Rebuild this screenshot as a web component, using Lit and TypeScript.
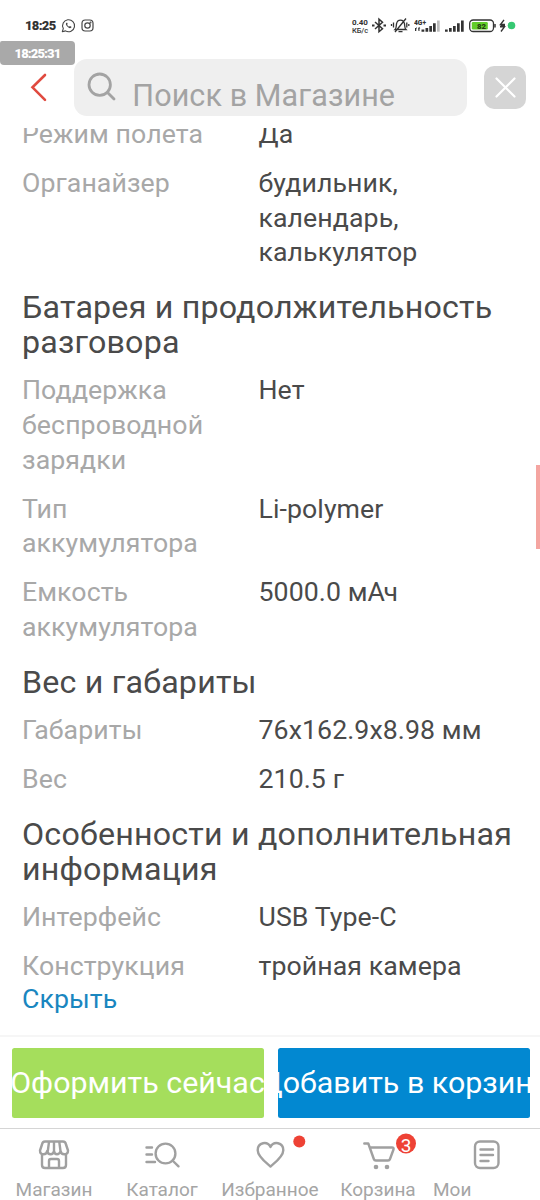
import { LitElement, html, css, svg } from "lit";
import { customElement, property } from "lit/decorators.js";

type Row = [string, string];
interface Section {
  title?: string;
  rows: Row[];
}

const SECTIONS: Section[] = [
  {
    rows: [
      ["Режим полета", "Да"],
      ["Органайзер", "будильник, календарь, калькулятор"],
    ],
  },
  {
    title: "Батарея и продолжительность разговора",
    rows: [
      ["Поддержка беспроводной зарядки", "Нет"],
      ["Тип аккумулятора", "Li-polymer"],
      ["Емкость аккумулятора", "5000.0 мАч"],
    ],
  },
  {
    title: "Вес и габариты",
    rows: [
      ["Габариты", "76x162.9x8.98 мм"],
      ["Вес", "210.5 г"],
    ],
  },
  {
    title: "Особенности и дополнительная информация",
    rows: [
      ["Интерфейс", "USB Type-C"],
      ["Конструкция", "тройная камера"],
    ],
  },
];

@customElement("status-bar")
export class StatusBar extends LitElement {
  static styles = css`
    :host {
      display: flex;
      height: 24px;
      padding: 14px 24px 0 25px;
      align-items: center;
      color: #333;
      font-family: Roboto, sans-serif;
    }
    svg {
      display: block;
      height: 24px;
      flex: none;
    }
    .clock {
      font-size: 13px;
      font-weight: 900;
      width: 36px;
      line-height: 24px;
      letter-spacing: -0.7px;
      white-space: nowrap;
    }
    .apps {
      display: flex;
      gap: 4px;
    }
    .right {
      display: flex;
      margin-left: auto;
    }
    .speed {
      width: 19px;
      font-size: 8px;
      line-height: 8px;
      font-weight: 700;
      padding-top: 5px;
      letter-spacing: -0.1px;
    }
    .unit {
      font-weight: 500;
      font-size: 7.5px;
      line-height: 7px;
    }
    .tiny {
      font: 900 8px Roboto, sans-serif;
    }
  `;

  render() {
    return html`
      <span class="clock">18:25</span>
      <span class="apps">
        <svg width="15" viewBox="61 14 15 24" fill="none" stroke="#444" stroke-width="1.1">
          <path d="M62.3 31.7 63.3 28.6A6 6 0 1 1 65.5 30.9Z" stroke-linejoin="round" />
          <path d="M66.4 22.8c-.9.8-.6 2 .4 3.3 1.200 1.500 2.600 2.300 3.700 2 .8-.3 1.100-.9.900-1.400l-1.500-.8-.9.800c-1-.5-1.500-1.100-1.900-1.900l.6-.8-.5-1.300z" fill="#444" stroke="none" />
        </svg>
        <svg width="15" viewBox="80 14 15 24" fill="none" stroke="#444" stroke-width="1.200">
          <rect x="82" y="20" width="11" height="11" rx="3.200" />
          <circle cx="87.500" cy="25.500" r="2.700" />
          <circle cx="90.500" cy="22.500" r=".4" />
        </svg>
      </span>
      <span class="right">
        <span class="speed">0.40<br /><span class="unit">КБ/с</span></span>
        <svg width="19" viewBox="371 14 19 24" fill="none" stroke="#333" stroke-width="1.500">
          <path d="m375 22 7.500 6.700-3.500 3V19.200l3.500 3.100L375 29" />
          <path d="M372 25.500h2.500M383.500 25.500h2.500" stroke-width="2.200" />
        </svg>
        <svg width="24" viewBox="390 14 24 24" fill="none" stroke="#333" stroke-width="1.300">
          <path d="M395 29.500c1.600-1.500 1.100-3.600 1.500-5.500.5-2.700 2.100-3.800 4-3.800s3.500 1.100 4 3.800c.4 1.900-.1 4 1.500 5.500zM398.500 31.700h4M395 32l11-13.500" />
          <path d="M393.500 22.500v5M391.500 24v2M406.800 22.500v5M408.800 24v2" />
        </svg>
        <svg width="27" viewBox="414 14 27 24" fill="#333">
          <text class="tiny" x="414" y="24.500" textLength="12" lengthAdjust="spacingAndGlyphs">4G+</text>
          <path d="M415 28h1v-1.200l1 1.700h-.7V31H415zM418.500 31h1v-2.500h.8l-1.200-1.700-1 1.700zM421.500 29.500h2.800v2.200h-2.800zM425.500 28h2.700v3.700h-2.700zM429.300 26h2.700v5.700h-2.700zM433 23.300h2.700v8.400H433z" />
          <path d="M437 20.500h2.700v11.200H437z" fill="#bbb" />
        </svg>
        <svg width="27" viewBox="441 14 27 24" fill="#333">
          <path d="M445 29.500h2.700v2.200H445zM449 28h2.700v3.700H449zM453 26h2.700v5.700H453zM457 23.300h2.700v8.400H457zM461 20.500h2.700v11.200H461z" />
        </svg>
        <svg width="30" viewBox="468 14 30 24">
          <rect x="469.700" y="20" width="23.800" height="11.500" rx="3.500" fill="#fff" stroke="#333" stroke-width="1.300" />
          <rect x="471.800" y="22" width="16" height="7.500" rx="1.300" fill="#62cc29" />
          <path d="M495 24v3.500" stroke="#333" stroke-width="1.500" />
          <text class="tiny" x="477" y="28.800" fill="#263b12" textLength="9" lengthAdjust="spacingAndGlyphs">82</text>
        </svg>
        <svg width="18" viewBox="498 14 18 24">
          <path d="m504 19.800-3.500 4.700h4.500M500 26.800h4.500l-3.500 4.700" fill="none" stroke="#333" stroke-width="1.400" />
          <path d="M500.500 25.700h4.500" stroke="#333" stroke-width="1.600" />
          <circle cx="511.500" cy="25.500" r="3.800" fill="#36c872" />
        </svg>
      </span>
    `;
  }
}

@customElement("search-header")
export class SearchHeader extends LitElement {
  static styles = css`
    :host {
      display: flex;
      box-sizing: border-box;
      height: 90px;
      padding: 21px 14px 12px 28px;
      font-family: Roboto, sans-serif;
    }
    .back {
      width: 46px;
      flex: none;
      height: 57px;
    }
    .field {
      box-sizing: border-box;
      width: 393px;
      height: 57px;
      border-radius: 13px;
      background: #efefef;
      display: flex;
      padding-left: 12px;
      overflow: hidden;
    }
    .glass {
      flex: none;
    }
    .hint {
      font-size: 30.500px;
      line-height: 34px;
      padding-top: 20px;
      margin-left: 14.300px;
      color: #a3a3a3;
      white-space: nowrap;
      letter-spacing: 0.100px;
    }
    .clear {
      margin: 7px 0 0 17px;
      width: 42px;
      height: 43px;
      border-radius: 10px;
      background: #d5d5d5;
    }
  `;

  render() {
    return html`
      <svg class="back" viewBox="28 59 46 57" fill="none" stroke="#e04a3f" stroke-width="2.600" stroke-linecap="round">
        <path d="M45 75 32.500 87.300 45 99.800" />
      </svg>
      <div class="field">
        <svg class="glass" width="32" height="57" viewBox="86 59 32 57" fill="none" stroke="#a3a3a3" stroke-width="2.800" stroke-linecap="round">
          <circle cx="99.700" cy="84.700" r="10.700" />
          <path d="m107.500 92.500 6.500 6.500" />
        </svg>
        <span class="hint">Поиск в Магазине</span>
      </div>
      <svg class="clear" viewBox="0 0 42 43" stroke="#fff" stroke-width="2.200" stroke-linecap="round">
        <path d="m12.500 12.500 18 18M30.500 12.500l-18 18" />
      </svg>
    `;
  }
}

@customElement("spec-section")
export class SpecSection extends LitElement {
  @property({ attribute: false }) section!: Section;

  static styles = css`
    :host {
      display: block;
      font-family: Roboto, sans-serif;
      color: #4a4a4a;
    }
    .title {
      margin: 6px 0 14px;
      font-size: 32.200px;
      line-height: 34.600px;
      font-weight: 400;
      letter-spacing: 0.200px;
    }
    .row {
      display: grid;
      grid-template-columns: 190px 200px;
      column-gap: 46.500px;
      padding-bottom: 14.400px;
      font-size: 26.700px;
      line-height: 34.600px;
      letter-spacing: 0.080px;
    }
    .name {
      color: #a8a8a8;
    }
    .wide {
      white-space: nowrap;
    }
  `;

  render() {
    const { title, rows } = this.section;
    return html`
      ${title ? html`<h2 class="title">${title}</h2>` : null}
      ${rows.map(
        ([name, value]) => html`<div class="row">
          <span class="name">${name}</span>
          <span class=${value.length < 20 ? "wide" : ""}>${value}</span>
        </div>`
      )}
    `;
  }
}

const NAV = [
  {
    label: "Магазин",
    icon: svg`<path d="M42 1144.500q.5-3 3-3h18q2.500 0 3 3l2 6q0 3.800-3.700 3.800-3.300 0-3.700-3.300-1 3.300-3.600 3.300-2.500 0-3-3.300-.8 3.300-3.300 3.300-3 0-3.500-3.300-.6 3.300-3.700 3.300-3.500 0-3.500-3.800zM47.800 1151l1.200-9M54 1151v-9M60.500 1151l-1.200-9M42 1155v10q0 3 3 3h18q3 0 3-3v-10M49 1168v-7q0-2 2-2h6q2 0 2 2v7"/>`,
  },
  {
    label: "Каталог",
    icon: svg`<circle cx="165.500" cy="1153.500" r="9.900"/><path d="m172.500 1160.500 6 5.800M146.500 1147.500h5.500M146.500 1154.500h5.500M146.500 1162h8.500"/>`,
  },
  {
    label: "Избранное",
    icon: svg`<path d="M270.500 1166.500c-4-3.500-12.800-9.800-12.800-16.300 0-8.200 9.800-9.400 12.800-3.200 3-6.200 12.800-5 12.800 3.200 0 6.500-8.800 12.800-12.800 16.300z"/><circle cx="299.300" cy="1141.500" r="6" fill="#ee4235" stroke="none"/>`,
  },
  {
    label: "Корзина",
    icon: svg`<path d="M364.300 1143.500h4l5.500 15.500q.5 1.500 2 1.500h12.200q1.500 0 2-1.500l3.500-9.500q.6-2-1.500-2h-22"/><circle cx="376" cy="1167" r="2.300" fill="#a0a0a0" stroke="none"/><circle cx="387" cy="1167" r="2.300" fill="#a0a0a0" stroke="none"/><circle cx="406" cy="1143.500" r="10" fill="#ee4235" stroke="none"/><text class="count" x="406" y="1152" text-anchor="middle">3</text>`,
  },
  {
    label: "Мои",
    icon: svg`<rect x="475" y="1141.500" width="23.500" height="26.500" rx="5"/><path d="M480.500 1149.500h12.500M480.500 1155h12.500M480.500 1161h8"/>`,
  },
];

@customElement("tab-bar")
export class TabBar extends LitElement {
  static styles = css`
    :host {
      display: grid;
      grid-template-columns: repeat(5, 108px);
      box-sizing: border-box;
      height: 72px;
      border-top: 1px solid #d5d5d5;
      font-family: Roboto, sans-serif;
      overflow: hidden;
    }
    .tab {
      display: flex;
      flex-direction: column;
      align-items: center;
    }
    .icon {
      width: 108px;
      height: 49px;
      flex: none;
    }
    .label {
      font-size: 19px;
      line-height: 22px;
      padding-top: 1px;
      color: #a5a5a5;
      white-space: nowrap;
    }
    .tab:last-child .label {
      align-self: flex-start;
      margin-left: 1px;
    }
    .count {
      font: 19px Roboto, sans-serif;
      fill: #fff;
      stroke: none;
    }
  `;

  render() {
    return NAV.map(
      ({ label, icon }, i) => html`<div class="tab">
        <svg class="icon" viewBox="${i * 108} 1129 108 49" fill="none" stroke="#a0a0a0" stroke-width="2.400" stroke-linecap="round" stroke-linejoin="round">
          ${icon}
        </svg>
        <span class="label">${label}</span>
      </div>`
    );
  }
}

@customElement("app-root")
export class AppRoot extends LitElement {
  static styles = css`
    :host {
      display: flex;
      flex-direction: column;
      position: relative;
      width: 540px;
      height: 1200px;
      overflow: hidden;
      background: #fff;
      font-family: Roboto, sans-serif;
    }
    .recorder {
      position: absolute;
      left: 0;
      top: 41px;
      width: 75px;
      height: 24px;
      border-radius: 2px 4px 4px 4px;
      background: #a9a9a9;
      color: #fff;
      font-size: 13px;
      font-weight: 900;
      letter-spacing: -0.9px;
      line-height: 26px;
      text-align: center;
    }
    .specs {
      height: 907px;
      overflow: hidden;
      box-sizing: border-box;
      padding-left: 22px;
    }
    .scrolled {
      margin-top: -11px;
    }
    .hide {
      display: block;
      margin-top: -16px;
      font-size: 26.700px;
      line-height: 34.600px;
      letter-spacing: 0.080px;
      color: #1a86bf;
    }
    .thumb {
      position: absolute;
      right: 0;
      top: 465px;
      width: 4px;
      height: 84px;
      background: #f5a5a1;
    }
    .actions {
      display: flex;
      box-sizing: border-box;
      height: 93px;
      gap: 14px;
      padding: 11px 10.500px 11px 11.500px;
      border-top: 2px solid #f6f6f6;
    }
    .action {
      flex: 1 1 0;
      height: 69.500px;
      min-width: 0;
      border-radius: 2.500px;
      display: flex;
      align-items: center;
      justify-content: center;
      overflow: hidden;
      white-space: nowrap;
      color: #fff;
      font-size: 30.400px;
    }
    .buy {
      background: #a5de5c;
    }
    .add {
      background: #0288d1;
    }
  `;

  render() {
    return html`
      <status-bar></status-bar>
      <search-header></search-header>
      <main class="specs">
        <div class="scrolled">
          ${SECTIONS.map((s) => html`<spec-section .section=${s}></spec-section>`)}
          <a class="hide">Скрыть</a>
        </div>
      </main>
      <div class="actions">
        <div class="action buy"><span>Оформить сейчас</span></div>
        <div class="action add"><span>Добавить в корзину</span></div>
      </div>
      <tab-bar></tab-bar>
      <div class="thumb"></div>
      <div class="recorder">18:25:31</div>
    `;
  }
}
